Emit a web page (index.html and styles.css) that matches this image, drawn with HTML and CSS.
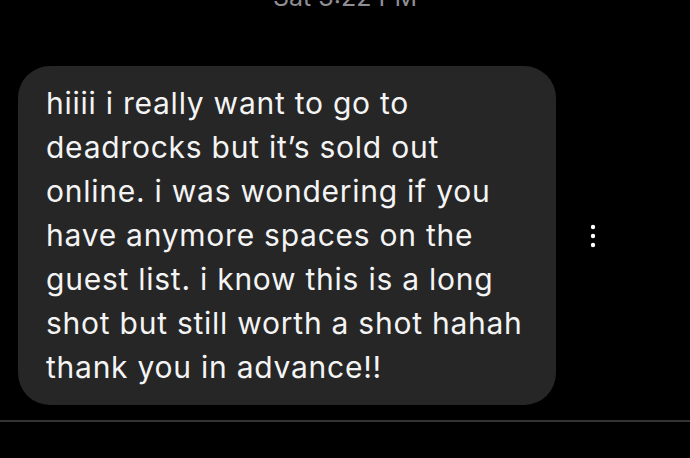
FILE: index.html
```html
<!DOCTYPE html>
<html>
<head>
<meta charset="utf-8">
<link rel="stylesheet" href="styles.css">
</head>
<body>
<div class="time"><span>Sat 3:22 PM</span></div>
<div class="row">
  <div class="bubble">hiiii i really want to go to<br>deadrocks but it’s sold out<br>online. i was wondering if you<br>have anymore spaces on the<br>guest list. i know this is a long<br>shot but still worth a shot hahah<br>thank you in advance!!</div>
  <div class="more">
    <svg width="6" height="24" viewBox="0 0 6 24"><circle cx="3" cy="3" r="2.2" fill="#fff"/><circle cx="3" cy="12" r="2.2" fill="#fff"/><circle cx="3" cy="21" r="2.2" fill="#fff"/></svg>
  </div>
</div>
<div class="divider"></div>
</body>
</html>
```
FILE: styles.css
```css
html, body {
  margin: 0;
  padding: 0;
  background: #000;
  width: 690px;
  height: 458px;
  overflow: hidden;
}
body {
  font-family: Inter, "Open Sans", sans-serif;
  color: #fff;
}
.time {
  height: 9px;
  overflow: hidden;
  display: flex;
  align-items: flex-end;
  justify-content: center;
  color: #8e8e93;
  font-size: 25px;
  line-height: 24px;
}
.time span { display: block; flex: none; }
.row {
  display: flex;
  align-items: center;
  margin-top: 57px;
  padding-left: 18px;
}
.bubble {
  width: 538px;
  box-sizing: border-box;
  background: #262626;
  border-radius: 32px;
  padding: 15px 0 16px 28px;
  font-size: 30px;
  line-height: 44px;
  letter-spacing: 0.75px;
  color: #f4f4f4;
}
.more {
  margin-left: 34px;
  display: flex;
  align-items: center;
}
.more svg { display: block; }
.divider {
  margin-top: 15px;
  height: 2px;
  background: #333;
}
```
